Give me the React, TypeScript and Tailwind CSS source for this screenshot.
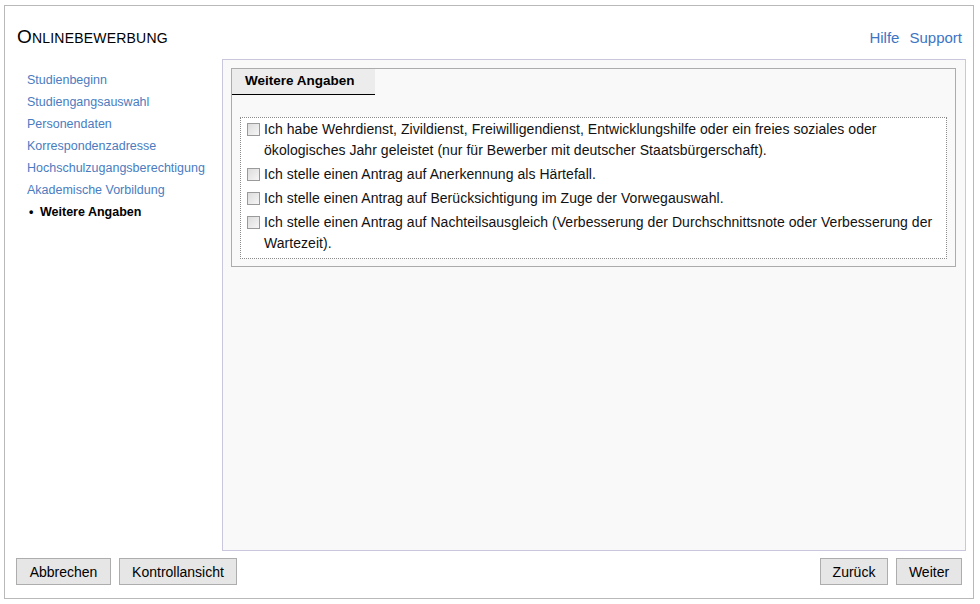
import React from "react";

const steps = [
  "Studienbeginn",
  "Studiengangsauswahl",
  "Personendaten",
  "Korrespondenzadresse",
  "Hochschulzugangsberechtigung",
  "Akademische Vorbildung",
];

const options = [
  "Ich habe Wehrdienst, Zivildienst, Freiwilligendienst, Entwicklungshilfe oder ein freies soziales oder ökologisches Jahr geleistet (nur für Bewerber mit deutscher Staatsbürgerschaft).",
  "Ich stelle einen Antrag auf Anerkennung als Härtefall.",
  "Ich stelle einen Antrag auf Berücksichtigung im Zuge der Vorwegauswahl.",
  "Ich stelle einen Antrag auf Nachteilsausgleich (Verbesserung der Durchschnittsnote oder Verbesserung der Wartezeit).",
];

const Button = ({ label, width }: { label: string; width: string }) => (
  <button className={`${width} h-[27px] bg-[#e6e6e6] border border-[#adadad] text-[14px] text-black leading-none`}>
    {label}
  </button>
);

export default function App() {
  return (
    <div
      className="w-[980px] h-[604px] bg-white pt-[5px] pl-[4px]"
      style={{ fontFamily: '"Liberation Sans", Arial, sans-serif' }}
    >
      <div className="w-[970px] h-[594px] border border-[#b9b9b9] flex flex-col">
        {/* Header */}
        <div className="h-[53px] flex items-center justify-between pl-[12px] pr-[11px] pt-[9px]">
          <div className="text-black text-[14px] tracking-[0.2px]">
            <span className="text-[19px]">O</span>NLINEBEWERBUNG
          </div>
          <div className="flex gap-[10px] text-[15px] text-[#3d74c4] pt-[2px]">
            <a>Hilfe</a>
            <a>Support</a>
          </div>
        </div>

        {/* Body */}
        <div className="flex h-[492px]">
          <ul className="w-[217px] pl-[22px] pt-[10px] text-[12.5px]">
            {steps.map((s) => (
              <li key={s} className="h-[22px] leading-[22px] text-[#4a7cbf]">
                {s}
              </li>
            ))}
            <li className="h-[22px] leading-[22px] text-black font-bold flex items-center">
              <span className="w-[3px] ml-[2px] mr-[8px]">•</span>
              Weitere Angaben
            </li>
          </ul>

          <div className="w-[744px] border border-[#c9c7de] bg-[#f9f9f9] pt-[8px] pl-[8px]">
            <div className="w-[725px] border border-[#acacac] pb-[7px]">
              <div className="w-[143px] h-[26px] bg-[#ececec] border-b-[1.5px] border-black text-[13.5px] font-bold text-black pl-[13px] leading-[24px]">
                Weitere Angaben
              </div>
              <div className="mt-[22px] ml-[8px] w-[707px] border border-dotted border-[#8a8a8a] bg-white pt-[1px] pb-[4px] text-[14px] tracking-[0.05px] text-[#111]">
                {options.map((o, i) => (
                  <label key={i} className={`flex ${i > 0 ? "mt-[3px]" : ""}`}>
                    <span className="mt-[4px] ml-[6px] mr-[4px] w-[13px] h-[13px] shrink-0 border border-[#9a9a9a] bg-gradient-to-br from-[#dcdcdc] to-[#f6f6f6]" />
                    <span className="leading-[21px] pr-[2px]">{o}</span>
                  </label>
                ))}
              </div>
            </div>
          </div>
        </div>

        {/* Footer */}
        <div className="flex justify-between pt-[7px] pl-[11px] pr-[11px]">
          <div className="flex gap-[8px]">
            <Button label="Abbrechen" width="w-[95px]" />
            <Button label="Kontrollansicht" width="w-[118px]" />
          </div>
          <div className="flex gap-[8px]">
            <Button label="Zurück" width="w-[68px]" />
            <Button label="Weiter" width="w-[66px]" />
          </div>
        </div>
      </div>
    </div>
  );
}
